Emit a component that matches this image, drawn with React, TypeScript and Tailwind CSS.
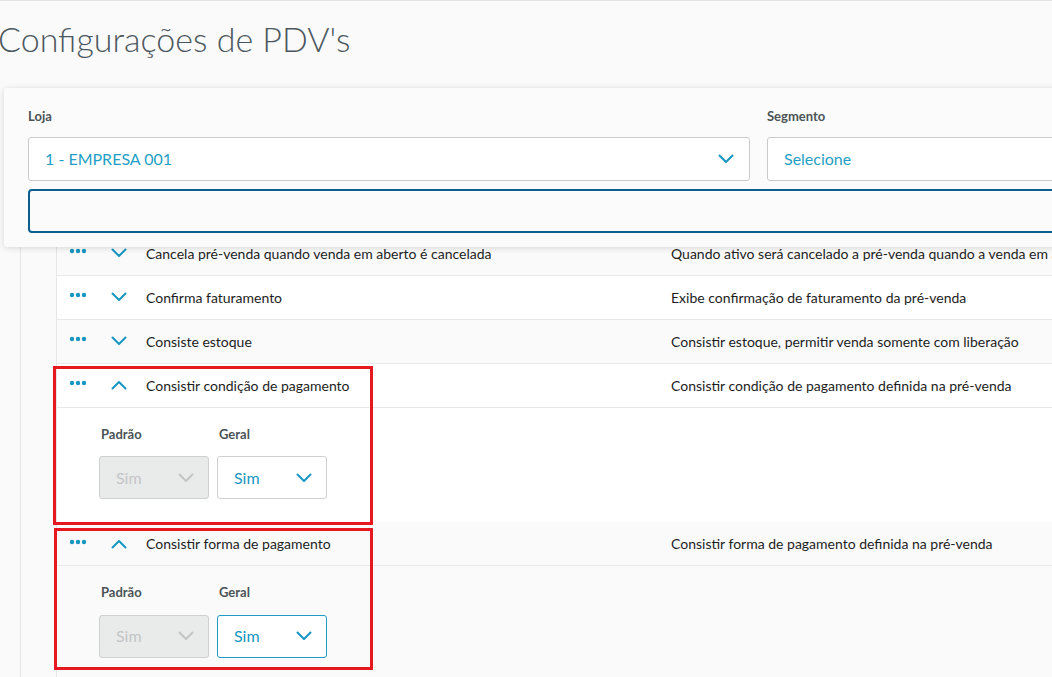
import { ReactNode } from 'react'

const font = { fontFamily: 'Lato, "Open Sans", sans-serif' }

function Chevron({ up = false, className = '' }: { up?: boolean; className?: string }) {
  return (
    <svg width="16" height="10" viewBox="0 0 16 10" className={className} fill="none">
      <path
        d={up ? 'M1.5 8.5 L8 2 L14.5 8.5' : 'M1.5 1.5 L8 8 L14.5 1.5'}
        stroke="currentColor"
        strokeWidth="2"
        strokeLinecap="round"
        strokeLinejoin="round"
      />
    </svg>
  )
}

function Dots() {
  return (
    <svg width="18" height="6" viewBox="0 0 18 6" className="text-[#1796c1]">
      <circle cx="3" cy="3" r="2.2" fill="currentColor" />
      <circle cx="9" cy="3" r="2.2" fill="currentColor" />
      <circle cx="15" cy="3" r="2.2" fill="currentColor" />
    </svg>
  )
}

type Row = { label: string; desc: string; open?: boolean; focus?: boolean }

const rows: Row[] = [
  { label: 'Cancela pré-venda quando venda em aberto é cancelada', desc: 'Quando ativo será cancelado a pré-venda quando a venda em aberto for cancelada' },
  { label: 'Confirma faturamento', desc: 'Exibe confirmação de faturamento da pré-venda' },
  { label: 'Consiste estoque', desc: 'Consistir estoque, permitir venda somente com liberação' },
  { label: 'Consistir condição de pagamento', desc: 'Consistir condição de pagamento definida na pré-venda', open: true },
  { label: 'Consistir forma de pagamento', desc: 'Consistir forma de pagamento definida na pré-venda', open: true, focus: true },
]

function SmallSelect({ disabled, focus }: { disabled?: boolean; focus?: boolean }) {
  return (
    <div
      className={
        'flex h-[43px] w-[110px] items-center justify-between rounded-[3px] border pl-[16px] pr-[14px] text-[16px] ' +
        (disabled
          ? 'border-[#cfd1d1] bg-[#e9eaea] text-[#c3c6c6]'
          : focus
            ? 'border-[#1f9cc4] bg-white text-[#1796c1]'
            : 'border-[#cfd1d1] bg-white text-[#1796c1]')
      }
    >
      <span>Sim</span>
      <Chevron className={disabled ? 'text-[#c3c6c6]' : 'text-[#1796c1]'} />
    </div>
  )
}

function Label({ children }: { children: ReactNode }) {
  return <div className="text-[13px] font-bold text-[#4b5357]">{children}</div>
}

export default function App() {
  return (
    <div style={font} className="relative h-[677px] w-[1052px] overflow-hidden border-t border-[#e2e2e2] bg-[#fafafa]">
      <h1 className="ml-[-2px] pt-[18px] text-[34px] font-light leading-[40px] text-[#4b575e]">
        Configurações de PDV's
      </h1>

      <div className="relative z-10 mb-[-15px] ml-[4px] mt-[29px] w-[1200px] rounded-[3px] bg-[#fbfbfb] px-[24px] pb-[14px] pt-[19px] shadow-[0_1px_6px_rgba(0,0,0,0.15)]">
        <div className="flex gap-[17px]">
          <div className="w-[722px] shrink-0">
            <Label>Loja</Label>
            <div className="mt-[10px] flex h-[44px] items-center justify-between rounded-[3px] border border-[#c9cbcb] bg-white pl-[16px] pr-[15px] text-[16px] text-[#1f9fc6]">
              <span>1 - EMPRESA 001</span>
              <Chevron className="text-[#1796c1]" />
            </div>
          </div>
          <div className="w-[420px] shrink-0">
            <Label>Segmento</Label>
            <div className="mt-[10px] flex h-[44px] items-center rounded-[3px] border border-[#c9cbcb] bg-white pl-[16px] text-[16px] text-[#1f9fc6]">
              Selecione
            </div>
          </div>
        </div>
        <div className="mt-[8px] h-[44px] rounded-[4px] border-2 border-[#0b5f8f] bg-[#fbfbfb]" />
      </div>

      <div className="ml-[20px] h-full border-l border-[#e6e6e6]">
        <div className="ml-[35px] h-full border-l border-[#e6e6e6] text-[14px] text-[#1d1d1d]">
          {rows.map((r, i) => (
            <div key={r.label} className={i % 2 === 0 ? 'bg-[#fafafa]' : 'bg-white'}>
              <div className="flex h-[44px] items-center border-b border-[#e8e8e8]">
                <div className="ml-[12px] mt-[-4px] w-[18px] shrink-0">
                  <Dots />
                </div>
                <div className="ml-[24px] w-[35px] shrink-0">
                  <Chevron up={r.open} className="text-[#1796c1]" />
                </div>
                <div className="w-[525px] shrink-0 whitespace-nowrap">{r.label}</div>
                <div className="shrink-0 whitespace-nowrap">{r.desc}</div>
              </div>
              {r.open && (
                <div className="flex gap-[8px] pb-[23px] pl-[42px] pt-[17px]">
                  <div>
                    <div className="ml-[2px]"><Label>Padrão</Label></div>
                    <div className="mt-[12px]"><SmallSelect disabled /></div>
                  </div>
                  <div>
                    <div className="ml-[2px]"><Label>Geral</Label></div>
                    <div className="mt-[12px]"><SmallSelect focus={r.focus} /></div>
                  </div>
                </div>
              )}
            </div>
          ))}
        </div>
      </div>

      <div className="absolute left-[53px] top-[365px] h-[159px] w-[320px] border-[3.5px] border-[#e5191f]" />
      <div className="absolute left-[54px] top-[527px] h-[142px] w-[319px] border-[3.5px] border-[#e5191f]" />
    </div>
  )
}
